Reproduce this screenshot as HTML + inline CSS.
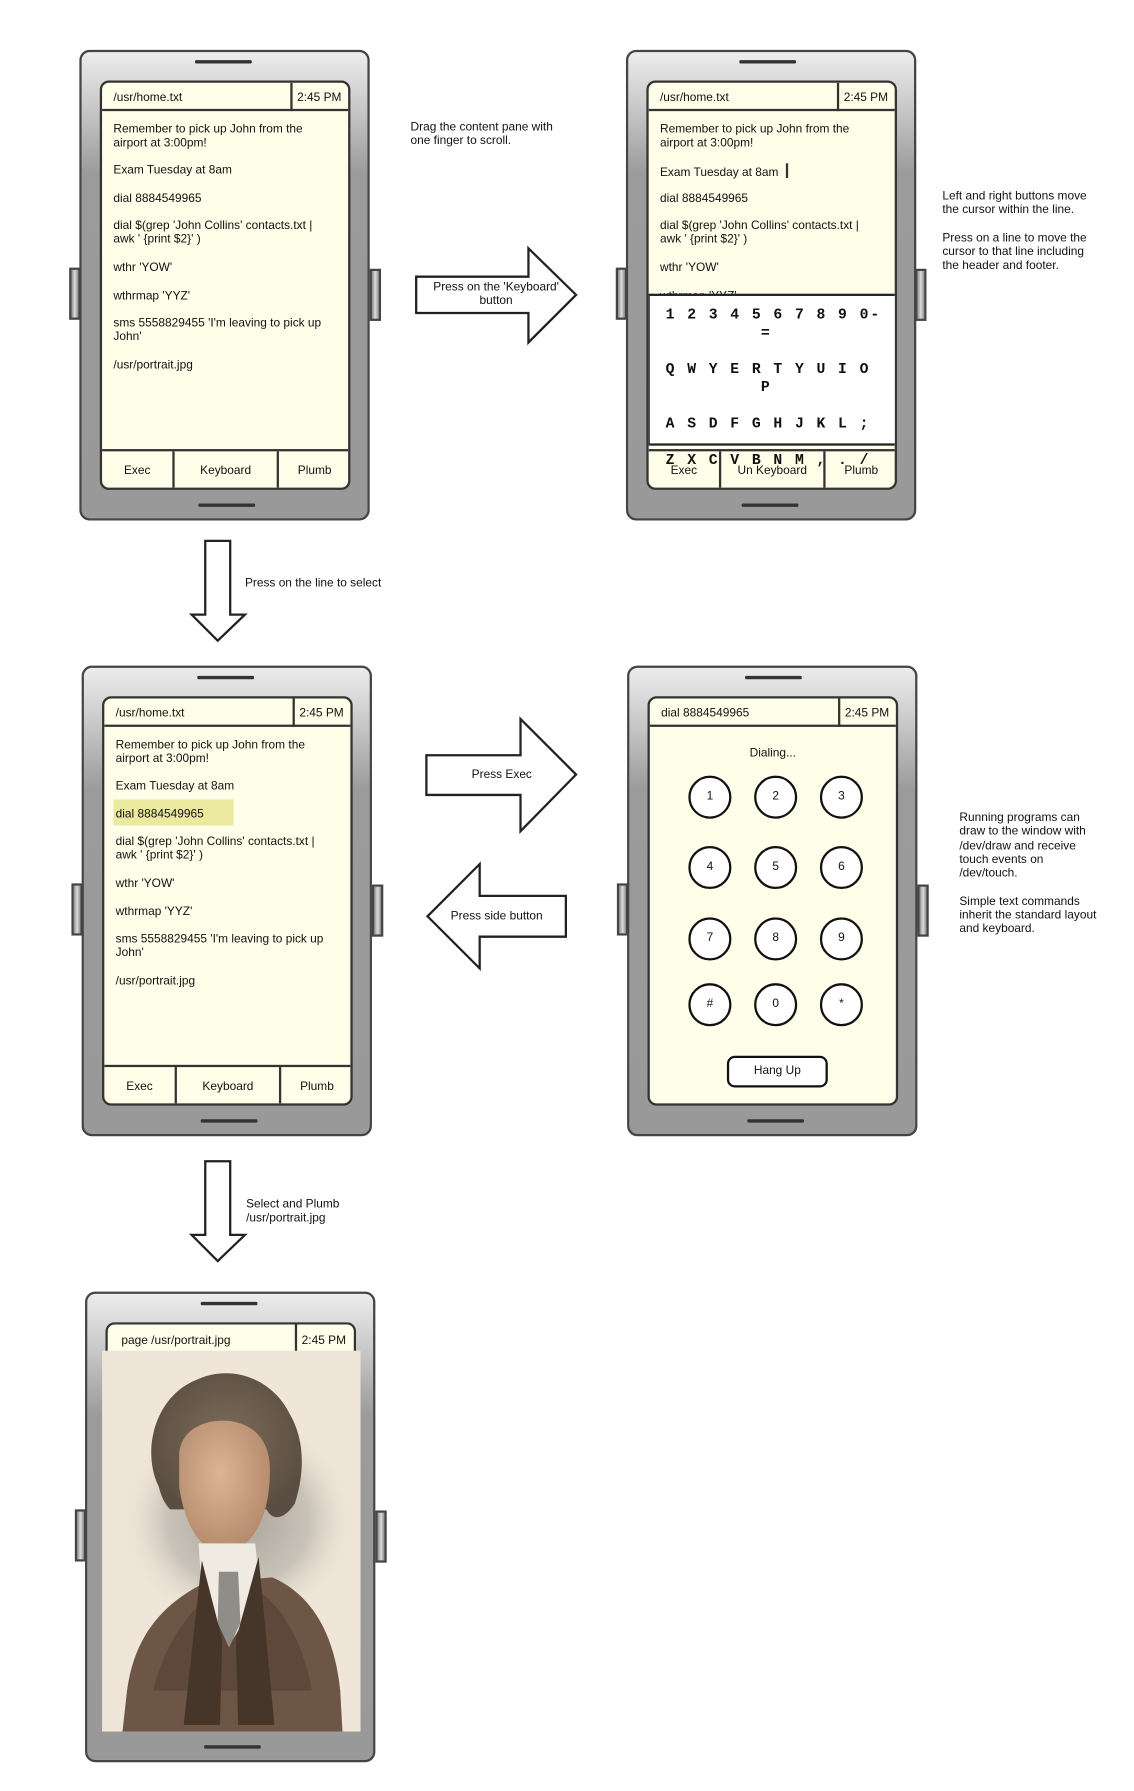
<!DOCTYPE html>
<html><head><meta charset="utf-8"><style>
*{margin:0;padding:0;box-sizing:border-box}
html,body{width:1134px;height:1790px;background:#fff;overflow:hidden}
#w{position:absolute;left:0;top:0;width:1000px;height:1579px;transform:scale(1.134);transform-origin:0 0;font-family:"Liberation Sans",sans-serif;font-size:10.5px;color:#111}
.ab{position:absolute}
.phone{position:absolute;width:256px;height:415px;border:2px solid #444;border-radius:9px;background:linear-gradient(#ececec 0%,#c8c8c8 12%,#9b9b9b 26%,#999 100%)}
.sb{position:absolute;width:10px;height:46px;top:191px;border:2px solid #444;background:linear-gradient(90deg,#888,#ddd 50%,#888)}
.spk{position:absolute;left:100px;width:50px;height:3px;background:#333;border-radius:1px}
.scr{position:absolute;left:16px;top:25px;width:221px;height:361px;border:2px solid #333;border-radius:8px;background:#fefee9;overflow:hidden}
.hd{position:absolute;left:0;top:0;right:0;height:25px;border-bottom:2px solid #333}
.hd .t{position:absolute;left:10px;top:7px}
.hd .c{position:absolute;right:0;top:0;width:51px;height:25px;border-left:2px solid #333;padding:7px 0 0 4px}
.ft{position:absolute;left:0;bottom:0;right:0;height:34px;border-top:2px solid #333}
.ft div{position:absolute;top:0;height:32px;text-align:center;padding-top:11px}
.ln{position:absolute;left:10px;line-height:12px;white-space:nowrap}
.kb{position:absolute;font-family:"Liberation Mono",monospace;font-weight:bold;font-size:13px;letter-spacing:1.7px;white-space:nowrap}
.note{position:absolute;line-height:12.3px;white-space:nowrap}
.circ{position:absolute;width:38px;height:38px;border:2.5px solid #111;border-radius:50%;background:#fff;text-align:center;line-height:33px}
</style></head><body><div id="w">

<svg class="ab" style="left:0;top:0" width="1000" height="1579">
<g fill="#fff" stroke="#222" stroke-width="2">
<polygon points="367,244 466,244 466,219 508,260 466,302 466,276 367,276"/>
<polygon points="376,666 459,666 459,634 508,683 459,733 459,701 376,701"/>
<polygon points="499,790 423,790 423,762 377,808 423,854 423,826 499,826"/>
<polygon points="181,477 203,477 203,542 216,542 192,565 169,542 181,542"/>
<polygon points="181,1024 203,1024 203,1089 216,1089 192,1112 169,1089 181,1089"/>
</g></svg>

<!-- Phone 1 -->
<div class="phone" style="left:70px;top:44px">
<div class="spk" style="top:7px"></div><div class="spk" style="top:398px;left:103px"></div>
<div class="scr">
<div class="hd"><span class="t">/usr/home.txt</span><div class="c">2:45 PM</div></div>
<div class="ln" style="top:35px">Remember to pick up John from the<br>airport at 3:00pm!</div>
<div class="ln" style="top:71px">Exam Tuesday at 8am</div>
<div class="ln" style="top:96px">dial 8884549965</div>
<div class="ln" style="top:120px">dial $(grep 'John Collins' contacts.txt |<br>awk ' {print $2}' )</div>
<div class="ln" style="top:157px">wthr 'YOW'</div>
<div class="ln" style="top:182px">wthrmap 'YYZ'</div>
<div class="ln" style="top:206px">sms 5558829455 'I'm leaving to pick up<br>John'</div>
<div class="ln" style="top:243px">/usr/portrait.jpg</div>
<div class="ft"><div style="left:0;width:64px;border-right:2px solid #333">Exec</div><div style="left:64px;width:92px;border-right:2px solid #333">Keyboard</div><div style="left:156px;width:63px">Plumb</div></div>
</div></div>
<div class="sb" style="left:61px;top:236px"></div><div class="sb" style="left:326px;top:237px"></div>

<div class="note" style="left:362px;top:106px">Drag the content pane with<br>one finger to scroll.</div>
<div class="note" style="left:370px;top:247px;width:135px;text-align:center">Press on the 'Keyboard'<br>button</div>

<!-- Phone 2 -->
<div class="phone" style="left:552px;top:44px">
<div class="spk" style="top:7px;left:98px"></div><div class="spk" style="top:398px;left:100px"></div>
<div class="scr">
<div class="hd"><span class="t">/usr/home.txt</span><div class="c">2:45 PM</div></div>
<div class="ln" style="top:35px">Remember to pick up John from the<br>airport at 3:00pm!</div>
<div class="ln" style="top:71px">Exam Tuesday at 8am <span style="display:inline-block;width:2px;height:13px;background:#333;vertical-align:-2px;margin-left:4px"></span></div>
<div class="ln" style="top:96px">dial 8884549965</div>
<div class="ln" style="top:120px">dial $(grep 'John Collins' contacts.txt |<br>awk ' {print $2}' )</div>
<div class="ln" style="top:157px">wthr 'YOW'</div>
<div class="ln" style="top:182px">wthrmap 'YYZ'</div>
<div class="ft"><div style="left:0;width:64px;border-right:2px solid #333">Exec</div><div style="left:64px;width:92px;border-right:2px solid #333">Un Keyboard</div><div style="left:156px;width:63px">Plumb</div></div>
<div class="kb" style="left:15px;top:325px">Z X C V B N M , . /</div>
<div class="ab" style="left:-1px;top:186px;width:221px;height:134px;background:#fff;border:2px solid #222"></div>
<div class="kb" style="left:15px;top:197px">1 2 3 4 5 6 7 8 9 0-</div>
<div class="kb" style="left:99px;top:213px">=</div>
<div class="kb" style="left:15px;top:245px">Q W Y E R T Y U I O</div>
<div class="kb" style="left:99px;top:261px">P</div>
<div class="kb" style="left:15px;top:293px">A S D F G H J K L ;</div>
</div></div>
<div class="sb" style="left:543px;top:236px"></div><div class="sb" style="left:807px;top:237px"></div>

<div class="note" style="left:831px;top:167px">Left and right buttons move<br>the cursor within the line.<br><br>Press on a line to move the<br>cursor to that line including<br>the header and footer.</div>

<div class="note" style="left:216px;top:508px">Press on the line to select</div>

<!-- Phone 3 -->
<div class="phone" style="left:72px;top:587px">
<div class="spk" style="top:7px"></div><div class="spk" style="top:398px;left:103px"></div>
<div class="scr">
<div class="hd"><span class="t">/usr/home.txt</span><div class="c">2:45 PM</div></div>
<div class="ln" style="top:35px">Remember to pick up John from the<br>airport at 3:00pm!</div>
<div class="ln" style="top:71px">Exam Tuesday at 8am</div>
<div class="ab" style="left:8px;top:89px;width:106px;height:23px;background:#ebe8a0"></div>
<div class="ln" style="top:96px">dial 8884549965</div>
<div class="ln" style="top:120px">dial $(grep 'John Collins' contacts.txt |<br>awk ' {print $2}' )</div>
<div class="ln" style="top:157px">wthr 'YOW'</div>
<div class="ln" style="top:182px">wthrmap 'YYZ'</div>
<div class="ln" style="top:206px">sms 5558829455 'I'm leaving to pick up<br>John'</div>
<div class="ln" style="top:243px">/usr/portrait.jpg</div>
<div class="ft"><div style="left:0;width:64px;border-right:2px solid #333">Exec</div><div style="left:64px;width:92px;border-right:2px solid #333">Keyboard</div><div style="left:156px;width:63px">Plumb</div></div>
</div></div>
<div class="sb" style="left:63px;top:779px"></div><div class="sb" style="left:328px;top:780px"></div>

<div class="note" style="left:376px;top:677px;width:133px;text-align:center">Press Exec</div>
<div class="note" style="left:383px;top:802px;width:110px;text-align:center">Press side button</div>

<!-- Phone 4 -->
<div class="phone" style="left:553px;top:587px">
<div class="spk" style="top:7px;left:102px"></div><div class="spk" style="top:398px;left:104px"></div>
<div class="scr">
<div class="hd"><span class="t">dial 8884549965</span><div class="c">2:45 PM</div></div>
<div class="ab" style="left:0;width:217px;top:42px;text-align:center">Dialing...</div>
<div class="circ" style="left:34px;top:68px">1</div><div class="circ" style="left:92px;top:68px">2</div><div class="circ" style="left:150px;top:68px">3</div>
<div class="circ" style="left:34px;top:130px">4</div><div class="circ" style="left:92px;top:130px">5</div><div class="circ" style="left:150px;top:130px">6</div>
<div class="circ" style="left:34px;top:193px">7</div><div class="circ" style="left:92px;top:193px">8</div><div class="circ" style="left:150px;top:193px">9</div>
<div class="circ" style="left:34px;top:251px">#</div><div class="circ" style="left:92px;top:251px">0</div><div class="circ" style="left:150px;top:251px">*</div>
<div class="ab" style="left:68px;top:315px;width:89px;height:28px;border:2.5px solid #111;border-radius:7px;background:#fff;text-align:center;line-height:23px">Hang Up</div>
</div></div>
<div class="sb" style="left:544px;top:779px"></div><div class="sb" style="left:809px;top:780px"></div>

<div class="note" style="left:846px;top:715px">Running programs can<br>draw to the window with<br>/dev/draw and receive<br>touch events on<br>/dev/touch.<br><br>Simple text commands<br>inherit the standard layout<br>and keyboard.</div>

<div class="note" style="left:217px;top:1056px">Select and Plumb<br>/usr/portrait.jpg</div>

<!-- Phone 5 -->
<div class="phone" style="left:75px;top:1139px">
<div class="spk" style="top:7px"></div><div class="spk" style="top:398px;left:103px"></div>
<div class="scr" style="background:transparent;border:none">
<div class="ab" style="left:0;top:0;width:221px;height:30px;border:2px solid #333;border-radius:8px 8px 0 0;background:#fefee9">
<span class="ab" style="left:12px;top:8px">page /usr/portrait.jpg</span>
<div class="ab" style="right:0;top:0;width:52px;height:28px;border-left:2px solid #333;padding:8px 0 0 4px">2:45 PM</div></div>
</div>
<svg class="ab" style="left:13px;top:50px" width="228" height="336" viewBox="0 0 228 336">
<defs>
<radialGradient id="bg" cx="50%" cy="50%" r="50%"><stop offset="0" stop-color="#a8a29a"/><stop offset="0.6" stop-color="#c9c2b8"/><stop offset="1" stop-color="#efe5d8" stop-opacity="0"/></radialGradient>
<radialGradient id="hair" cx="50%" cy="45%" r="55%"><stop offset="0" stop-color="#7d6c58"/><stop offset="1" stop-color="#5a4e42"/></radialGradient>
<radialGradient id="face" cx="45%" cy="40%" r="60%"><stop offset="0" stop-color="#dcb496"/><stop offset="1" stop-color="#b58a6c"/></radialGradient>
</defs>
<rect width="228" height="336" fill="#efe5d8"/>
<ellipse cx="120" cy="150" rx="105" ry="95" fill="url(#bg)"/>
<path d="M22,300 C28,255 50,225 90,205 L150,200 C185,215 205,250 210,300 L212,336 L18,336 Z" fill="#6e5646"/>
<path d="M45,300 C55,260 75,230 100,212 L135,210 C160,225 178,260 185,300 Z" fill="#5e4839"/>
<path d="M50,120 C35,90 45,40 85,25 C115,12 150,25 165,55 C180,80 178,110 170,135 C160,150 150,150 145,140 L60,140 C55,135 52,128 50,120 Z" fill="url(#hair)"/>
<path d="M68,90 C70,70 90,60 112,62 C135,65 148,80 148,105 C148,140 138,170 110,180 C85,178 72,150 68,120 Z" fill="url(#face)"/>
<path d="M85,170 L135,170 L140,215 L112,260 L88,212 Z" fill="#efeae2"/>
<path d="M103,195 L120,195 L122,240 L112,262 L102,240 Z" fill="#8f8d88"/>
<path d="M88,185 L72,330 L104,330 L106,255 Z" fill="#463629"/>
<path d="M138,182 L152,330 L120,330 L118,255 Z" fill="#463629"/>
</svg>
</div>
<div class="sb" style="left:66px;top:1331px"></div><div class="sb" style="left:331px;top:1332px"></div>

</div></body></html>
